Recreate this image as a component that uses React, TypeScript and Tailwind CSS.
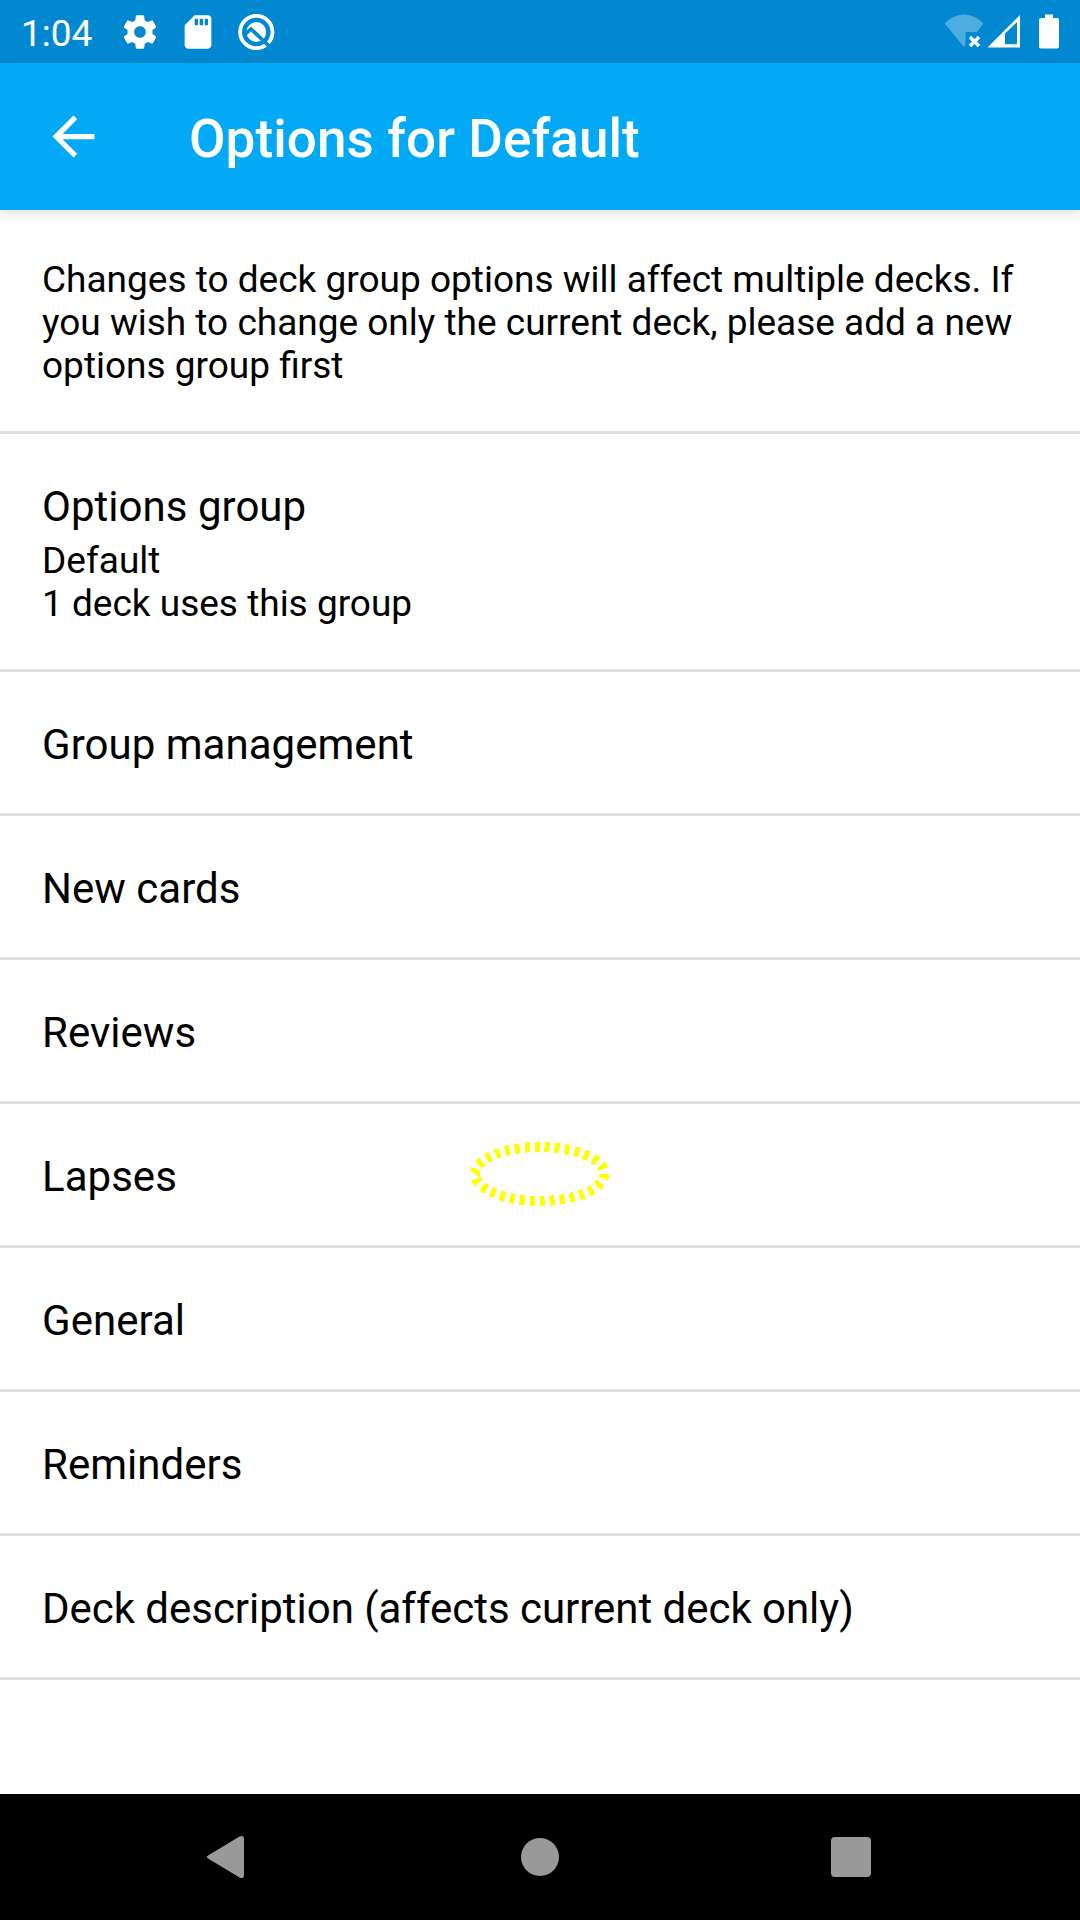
import React from "react";

const rows = ["Group management", "New cards", "Reviews", "Lapses", "General", "Reminders", "Deck description (affects current deck only)"];

function Title({ children }: { children: string }) {
  const tracking = children.length > 30 ? "tracking-[-0.03px]" : "tracking-[0.03px]";
  return <div className={`text-[42px] leading-[49px] whitespace-nowrap ${tracking}`}>{children}</div>;
}

function StatusBar() {
  return (
    <div className="flex h-[63px] items-center bg-[#0288d1] pl-[21px] text-white">
      <span className="w-[99px] pt-[3px] text-[37px] leading-[43px]">1:04</span>
      <svg className="h-[40px] w-[40px]" viewBox="0 0 24 24" fill="currentColor">
        <path d="M19.43 12.98c.04-.32.07-.64.07-.98s-.03-.66-.07-.98l2.11-1.65c.19-.15.24-.42.12-.64l-2-3.46c-.12-.22-.39-.3-.61-.22l-2.49 1c-.52-.4-1.08-.73-1.69-.98l-.38-2.65C14.46 2.18 14.25 2 14 2h-4c-.25 0-.46.18-.49.42l-.38 2.65c-.61.25-1.17.59-1.69.98l-2.49-1c-.23-.09-.49 0-.61.22l-2 3.46c-.13.22-.07.49.12.64l2.11 1.65c-.04.32-.07.65-.07.98s.03.66.07.98l-2.11 1.65c-.19.15-.24.42-.12.64l2 3.46c.12.22.39.3.61.22l2.49-1c.52.4 1.08.73 1.69.98l.38 2.65c.03.24.24.42.49.42h4c.25 0 .46-.18.49-.42l.38-2.65c.61-.25 1.17-.59 1.69-.98l2.49 1c.23.09.49 0 .61-.22l2-3.46c.12-.22.07-.49-.12-.64l-2.11-1.65zM12 15.5c-1.93 0-3.5-1.57-3.5-3.5s1.57-3.5 3.5-3.5 3.5 1.57 3.5 3.5-1.57 3.5-3.5 3.5z" />
      </svg>
      <svg className="ml-[18px] h-[40px] w-[40px]" viewBox="0 0 24 24" fill="currentColor">
        <path d="M18 2h-8L4.02 8 4 20c0 1.1.9 2 2 2h12c1.1 0 2-.9 2-2V4c0-1.100-.9-2-2-2zm-6 6h-2V4h2v4zm3 0h-2V4h2v4zm3 0h-2V4h2v4z" />
      </svg>
      <svg className="ml-[18px] h-[40px] w-[40px]" viewBox="0 0 40 40" fill="none">
        <circle cx="20.300" cy="20" r="16.200" stroke="currentColor" strokeWidth="3.800" />
        <circle cx="20.300" cy="20" r="9.900" fill="currentColor" />
        <path d="M9 22.500L15 17L34.500 35.500" stroke="#0288d1" strokeWidth="3.600" />
      </svg>
      <svg className="ml-auto h-[40px] w-[40px]" viewBox="0 0 40 40" fill="currentColor">
        <path opacity=".3" d="M20 35L.7 11.500C6 6 12.500 2.500 20 2.500S34 6 39.300 11.500L33 20H21.500V33.200Z" />
        <path d="M26 25L35 34M35 25L26 34" stroke="currentColor" strokeWidth="3.400" />
      </svg>
      <svg className="ml-[3px] h-[40px] w-[34px]" viewBox="0 0 34 40" fill="currentColor">
        <path fillRule="evenodd" d="M.5 35.500L33 3V35.500ZM18 21.500V32.300H30V10Z" />
      </svg>
      <svg className="mr-[21px] ml-[18px] h-[40px] w-[20px]" viewBox="0 0 20 40" fill="currentColor">
        <path d="M6 2.500H14V6H18Q20 6 20 8V34.500Q20 36.500 18 36.500H2Q0 36.500 0 34.500V8Q0 6 2 6H6Z" />
      </svg>
    </div>
  );
}

export default function App() {
  return (
    <div className="flex h-[1920px] w-[1080px] flex-col overflow-hidden bg-white font-['Roboto',sans-serif] text-black">
      <StatusBar />
      <header className="flex h-[147px] items-center bg-[#03a9f4] pl-[42px] text-white shadow-[0_4px_12px_rgba(0,0,0,0.12)]">
        <svg className="h-[63px] w-[63px]" viewBox="0 0 24 24" fill="currentColor">
          <path d="M20 11H7.830l5.590-5.590L12 4l-8 8 8 8 1.410-1.410L7.830 13H20v-2z" />
        </svg>
        <h1 className="ml-[84px] pt-[5px] text-[53px] leading-[62px] font-medium tracking-[0.09px] whitespace-nowrap">Options for Default</h1>
      </header>
      <main className="flex flex-1 flex-col">
        <p className="border-b-[3px] border-[#e0e0e0] pt-[48px] pr-[40px] pb-[44px] pl-[42px] text-[37px] leading-[43px]">
          Changes to deck group options will affect multiple decks. If
          <br />
          you wish to change only the current deck, please add a new
          <br />
          options group first
        </p>
        <div className="border-b-[3px] border-[#e0e0e0] px-[42px] pt-[48px] pb-[44px]">
          <Title>Options group</Title>
          <p className="mt-[8px] text-[37px] leading-[43px]">
            Default
            <br />1 deck uses this group
          </p>
        </div>
        {rows.map((row) => (
          <div key={row} className="relative border-b-[3px] border-[#e0e0e0] px-[42px] pt-[48px] pb-[44px]">
            <Title>{row}</Title>
            {row === "Lapses" && (
              <svg className="absolute top-[36px] left-[469px] h-[70px] w-[142px]" viewBox="0 0 142 70" fill="none" shapeRendering="crispEdges">
                <ellipse cx="70.700" cy="34" rx="64.700" ry="27" pathLength="300" stroke="#ffff00" strokeWidth="10" strokeDasharray="5 5" />
              </svg>
            )}
          </div>
        ))}
      </main>
      <nav className="flex h-[126px] items-center bg-black pl-[206px] text-[#999999]">
        <svg className="h-[44px] w-[40px]" viewBox="0 0 40 44" fill="currentColor">
          <path d="M2 20.500L33.500 1.500Q38 -.5 38 4V40Q38 44.500 33.500 42.500L2 23.500Q-.5 22 2 20.500Z" />
        </svg>
        <span className="ml-[275px] h-[38px] w-[38px] rounded-full bg-[#999999]" />
        <span className="ml-[272px] h-[40px] w-[40px] rounded-[4px] bg-[#999999]" />
      </nav>
    </div>
  );
}
